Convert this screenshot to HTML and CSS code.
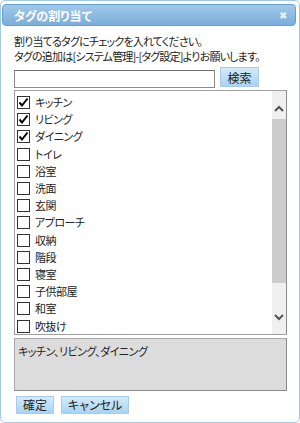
FILE: index.html
```html
<!DOCTYPE html>
<html lang="ja">
<head>
    <meta charset="UTF-8">
    <meta name="viewport" content="width=device-width, initial-scale=1.0">
    <title>タグの割り当て</title>
    <link rel="stylesheet" href="styles.css">
</head>
<body>
    <div class="dialog">
        <div class="titlebar">
            <span class="title">タグの割り当て</span>
            <span class="close">✖</span>
        </div>

        <div class="content">
            <p class="note">割り当てるタグにチェックを入れてください。<br>タグの追加は[システム管理]-[タグ設定]よりお願いします。</p>

            <form class="search">
                <input type="text" class="search-input">
                <button type="button" class="btn">検索</button>
            </form>

            <!-- Tag list with scrollbar -->
            <div class="tag-box">
                <ul class="tag-list">
                    <li><span class="check"><svg width="11" height="11" viewBox="0 0 11 11"><path d="M1.5 5.5 L4 8.5 L9.5 1.5" fill="none" stroke="#000" stroke-width="2"/></svg></span>キッチン</li>
                    <li><span class="check"><svg width="11" height="11" viewBox="0 0 11 11"><path d="M1.5 5.5 L4 8.5 L9.5 1.5" fill="none" stroke="#000" stroke-width="2"/></svg></span>リビング</li>
                    <li><span class="check"><svg width="11" height="11" viewBox="0 0 11 11"><path d="M1.5 5.5 L4 8.5 L9.5 1.5" fill="none" stroke="#000" stroke-width="2"/></svg></span>ダイニング</li>
                    <li><span class="check"></span>トイレ</li>
                    <li><span class="check"></span>浴室</li>
                    <li><span class="check"></span>洗面</li>
                    <li><span class="check"></span>玄関</li>
                    <li><span class="check"></span>アプローチ</li>
                    <li><span class="check"></span>収納</li>
                    <li><span class="check"></span>階段</li>
                    <li><span class="check"></span>寝室</li>
                    <li><span class="check"></span>子供部屋</li>
                    <li><span class="check"></span>和室</li>
                    <li><span class="check"></span>吹抜け</li>
                </ul>
                <div class="scrollbar">
                    <div class="sb-up"><svg width="14" height="28" viewBox="0 0 14 28"><path d="M3 20 L7 16 L11 20" fill="none" stroke="#555" stroke-width="2"/></svg></div>
                    <div class="sb-thumb"></div>
                    <div class="sb-track"></div>
                    <div class="sb-down"><svg width="14" height="29" viewBox="0 0 14 29"><path d="M3 10 L7 14 L11 10" fill="none" stroke="#555" stroke-width="2"/></svg></div>
                </div>
            </div>

            <div class="selected">キッチン、リビング、ダイニング</div>

            <div class="actions">
                <button type="button" class="btn">確定</button>
                <button type="button" class="btn">キャンセル</button>
            </div>
        </div>
    </div>
</body>
</html>
```

FILE: styles.css
```css
/* Global Styles */
body {
    margin: 0;
    font-family: "Noto Sans CJK JP", sans-serif;
    font-size: 11px;
    line-height: 15px;
    letter-spacing: -0.5px;
    font-feature-settings: "palt";
    color: #222;
    background: #fff;
}

/* Dialog frame */
.dialog {
    width: 300px;
    height: 423px;
    box-sizing: border-box;
    border: 1px solid #a6c9e2;
    border-radius: 5px;
    padding: 3px 3px 0 1px;
    background: #fff;
}

.titlebar {
    height: 22px;
    box-sizing: border-box;
    display: flex;
    align-items: center;
    justify-content: space-between;
    padding: 0 9px 0 11px;
    background: linear-gradient(#a2c8e8, #7aaedb);
    border: 1px solid #62a0d4;
    border-radius: 4px;
}

.title {
    color: #fff;
    font-weight: bold;
    font-size: 12px;
    letter-spacing: 0;
}

.close {
    color: #e8f2fb;
    font-size: 10px;
    line-height: 1;
}

/* Body */
.content {
    padding: 0 9px 0 12px;
}

.note {
    margin: 8px 0 0;
    letter-spacing: -0.8px;
    white-space: nowrap;
}

.search {
    display: flex;
    align-items: flex-start;
    gap: 5px;
    margin: 3px 0 0;
}

.search-input {
    width: 201px;
    height: 18px;
    box-sizing: border-box;
    margin: 3px 0 0;
    border: 1px solid #8a8a8a;
    border-top-color: #6e6e6e;
    padding: 0 2px;
    font: inherit;
    outline: none;
}

.btn {
    height: 19px;
    padding: 0 5px;
    border: 1px solid #a9cde9;
    background: linear-gradient(#d3ebfb, #a8d3f2);
    font-family: inherit;
    font-size: 12px;
    font-feature-settings: "palt";
    letter-spacing: 0;
    color: #222;
    line-height: 17px;
    cursor: pointer;
}

.search .btn {
    width: 39px;
    height: 20px;
}

/* Tag list */
.tag-box {
    display: flex;
    height: 245px;
    box-sizing: border-box;
    margin-top: 2px;
    border: 1px solid #a0a0a0;
    border-right-color: #8c8c8c;
    overflow: hidden;
}

.tag-list {
    flex: 1;
    list-style: none;
    margin: 0;
    padding: 3px 0 0 2px;
}

.tag-list li {
    height: 17.2px;
    display: flex;
    align-items: center;
    gap: 5px;
}

.check {
    width: 13px;
    height: 13px;
    box-sizing: border-box;
    border: 1px solid #333;
    background: #fff;
    display: flex;
    align-items: center;
    justify-content: center;
}

.scrollbar {
    width: 14px;
    display: flex;
    flex-direction: column;
    background: #f0f0f0;
}

.sb-up svg,
.sb-down svg {
    display: block;
}

.sb-thumb {
    height: 164px;
    background: #cdcdcd;
}

.sb-track {
    flex: 1;
}

/* Selected tags */
.selected {
    height: 53px;
    box-sizing: border-box;
    margin-top: 3px;
    padding: 5px 3px;
    border: 1px solid #a8a8a8;
    border-right-color: #8c8c8c;
    border-bottom-color: #8c8c8c;
    background: #dcdcdc;
}

.actions {
    display: flex;
    gap: 7px;
    margin: 5px 0 0 2px;
}

.actions .btn {
    height: 18px;
    padding: 0 6px;
    line-height: 16px;
}
```
